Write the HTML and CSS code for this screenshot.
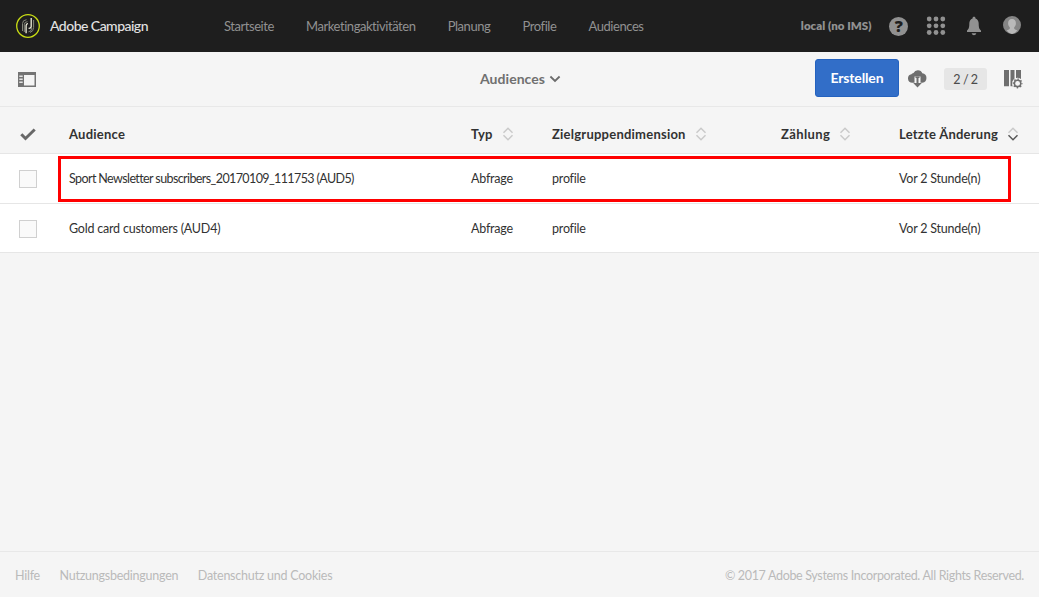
FILE: index.html
```
<!DOCTYPE html>
<html lang="de">
<head>
<meta charset="utf-8">
<title>Adobe Campaign</title>
<link rel="stylesheet" href="styles.css">
</head>
<body>
<svg class="defs" width="0" height="0">
  <symbol id="sort" viewBox="0 0 12 14">
    <path class="up" d="M1.500 5.700 6 1.200l4.500 4.500" fill="none" stroke-width="1.500"/>
    <path class="down" d="M1.500 8.300 6 12.800l4.500-4.500" fill="none" stroke="currentColor" stroke-width="1.500"/>
  </symbol>
</svg>
<div class="app">
  <header class="topbar">
    <svg class="logo" viewBox="0 0 24 24" width="24" height="24" fill="none">
      <circle cx="12" cy="12" r="11.300" stroke="#c8dc14" stroke-width="1.300"/>
      <path d="M6.500 17V9.500Q6.500 6 10.500 5.700M8.300 18V10.500Q8.300 7.800 11.500 7.700M12.500 17.800Q15.800 17.500 15.800 14M17.600 6v7.500Q17.600 17.500 14 18.500" stroke="#85877a" stroke-width="1"/>
      <path d="M10.100 19.300V11.500Q10.100 9.800 12 9.700M15.200 4v8.500q0 1.800-2.600 1.900" stroke="#f0f0dc" stroke-width="1.300"/>
    </svg>
    <span class="brand">Adobe Campaign</span>
    <nav class="nav">
      <a>Startseite</a><a>Marketingaktivitäten</a><a>Planung</a><a>Profile</a><a>Audiences</a>
    </nav>
    <span class="org">local (no IMS)</span>
    <div class="tools">
      <span class="help">?</span>
      <svg width="20" height="20" viewBox="0 0 20 20" fill="#919191">
        <circle cx="3.200" cy="3" r="2.400"/><circle cx="10" cy="3" r="2.400"/><circle cx="16.800" cy="3" r="2.400"/>
        <circle cx="3.200" cy="9.800" r="2.400"/><circle cx="10" cy="9.800" r="2.400"/><circle cx="16.800" cy="9.800" r="2.400"/>
        <circle cx="3.200" cy="16.500" r="2.400"/><circle cx="10" cy="16.500" r="2.400"/><circle cx="16.800" cy="16.500" r="2.400"/>
      </svg>
      <svg width="16" height="20" viewBox="0 0 16 20" fill="#919191">
        <path d="M8 .8c1 0 1.500.6 1.500 1.600 2.200.7 3.200 2.600 3.200 5.200 0 4 .5 5.400 2.300 7v1.300H1v-1.300c1.800-1.600 2.300-3 2.300-7 0-2.600 1-4.500 3.200-5.200C6.500 1.400 7 .8 8 .8zM5.600 17.200h4.800Q9.800 19.200 8 19.200t-2.400-2z"/>
      </svg>
      <svg class="avatar" width="18" height="18" viewBox="0 0 18 18">
        <circle cx="9" cy="9" r="9" fill="#858585"/>
        <path d="M9 3c2.700 0 3.900 1.800 3.900 4.200 0 1.700-.6 3.100-1.700 4.100v1.300c0 .7 1.500 1.200 3.200 2A9 9 0 0 1 9 18a9 9 0 0 1-5.400-3.400c1.700-.8 3.200-1.300 3.200-2v-1.300c-1.100-1-1.700-2.400-1.700-4.100C5.100 4.800 6.300 3 9 3z" fill="#b9b9b9"/>
      </svg>
    </div>
  </header>

  <div class="toolbar">
    <svg class="panel-icon" width="18" height="15" viewBox="0 0 18 15">
      <path d="M0 0h18v15H0z" fill="#747474"/><path d="M6 3h10.500v10.500H6z" fill="#f5f5f5"/>
      <path d="M1.300 3.500h3.400v1.500H1.300zM1.300 6.500h3.400v1.500H1.300zM1.300 9.500h3.400v1.500H1.300z" fill="#e4e4e4"/>
    </svg>
    <div class="title">Audiences
      <svg width="12" height="8" viewBox="0 0 12 8"><path d="M1.400 1.500 6 6l4.600-4.500" fill="none" stroke="#6b6b6b" stroke-width="1.800"/></svg>
    </div>
    <div class="actions">
      <button class="create">Erstellen</button>
      <svg class="cloud" width="19" height="19" viewBox="0 0 19 19">
        <path d="M4.400 13.800A4.300 4.300 0 0 1 3.400 5.300Q4 4 5.500 3.900A4.800 4.800 0 0 1 14.300 4.300 4.800 4.800 0 0 1 14.400 13.800z" fill="#6e6e6e"/>
        <path d="M6.500 7.500h6v6.500h-6z" fill="#f5f5f5"/>
        <path d="M7.500 7.500h4v1.500h-4zM8.500 8.500h2v5.500h3.300L9.500 18.600 5.200 14h3.300z" fill="#6e6e6e"/>
      </svg>
      <span class="count">2 / 2</span>
      <svg class="columns" width="19" height="19" viewBox="0 0 19 19">
        <path d="M0 0h5v16.300H0zM6.500 0h4v16.300h-4zM12 0h5v9h-5z" fill="#6e6e6e"/>
        <circle cx="13.600" cy="13.400" r="5.600" fill="#f5f5f5"/>
        <circle cx="13.600" cy="13.400" r="3.200" fill="none" stroke="#6e6e6e" stroke-width="1.500"/>
        <circle cx="13.600" cy="13.400" r="4.300" fill="none" stroke="#6e6e6e" stroke-width="1.400" stroke-dasharray="1.500 1.877" stroke-dashoffset=".75"/>
      </svg>
    </div>
  </div>

  <div class="table">
    <div class="row head">
      <div class="check-cell"><svg width="16" height="13" viewBox="0 0 16 13"><path d="M1.300 6.300 5.500 10.500 14.700 1.500" fill="none" stroke="#686868" stroke-width="3"/></svg></div>
      <div>Audience</div>
      <div>Typ<svg class="sort"><use href="#sort"/></svg></div>
      <div>Zielgruppendimension<svg class="sort"><use href="#sort"/></svg></div>
      <div class="number">Zählung<svg class="sort"><use href="#sort"/></svg></div>
      <div>Letzte Änderung<svg class="sort active"><use href="#sort"/></svg></div>
    </div>
    <div class="row first">
      <div class="check-cell"><span class="box"></span></div>
      <div class="long-name">Sport Newsletter subscribers_20170109_111753 (AUD5)</div>
      <div>Abfrage</div><div>profile</div><div></div><div>Vor 2 Stunde(n)</div>
      <span class="highlight"></span>
    </div>
    <div class="row last">
      <div class="check-cell"><span class="box"></span></div>
      <div>Gold card customers (AUD4)</div>
      <div>Abfrage</div><div>profile</div><div></div><div>Vor 2 Stunde(n)</div>
    </div>
  </div>

  <footer class="footer">
    <a>Hilfe</a><a>Nutzungsbedingungen</a><a>Datenschutz und Cookies</a>
    <span class="copyright">© 2017 Adobe Systems Incorporated. All Rights Reserved.</span>
  </footer>
</div>
</body>
</html>
```
FILE: styles.css
```
* { box-sizing: border-box; }
body {
  margin: 0;
  background: #fff;
  font: 400 13px/18px Lato, "Noto Sans", sans-serif;
  letter-spacing: -.45px;
  color: #323232;
  overflow: hidden;
}
svg { display: block; flex: none; }
.defs { position: absolute; }
.app {
  width: 1039px;
  height: 597px;
  background: #f5f5f5;
  display: flex;
  flex-direction: column;
  white-space: nowrap;
}

.topbar {
  height: 52px;
  flex: none;
  background: #1e1e1e;
  display: flex;
  align-items: center;
  padding: 0 18px 0 16px;
}
.brand {
  width: 174px;
  margin-left: 10px;
  font-size: 14px;
  font-weight: 500;
  letter-spacing: -.53px;
  color: #e2e2e2;
}
.nav { display: flex; gap: 32.2px; color: #919191; }
.org {
  margin-left: auto;
  font-size: 11.5px;
  font-weight: 800;
  letter-spacing: .03px;
  color: #919191;
}
.tools { display: flex; align-items: center; margin-left: 17.5px; }
.help {
  width: 19px;
  height: 19px;
  border-radius: 50%;
  background: #919191;
  color: #1e1e1e;
  font: 800 16px/19px "Open Sans", sans-serif;
  text-align: center;
  margin-right: 18px;
}
.tools svg + svg { margin-left: 20px; }
.tools svg + .avatar { margin: -2px 0 0 21px; }

.toolbar {
  height: 55px;
  flex: none;
  border-bottom: 1px solid #e8e8e8;
  display: grid;
  grid-template-columns: 1fr auto 1fr;
  align-items: center;
  padding: 0 16px 0 18px;
}
.title {
  display: flex;
  align-items: center;
  gap: 4px;
  font-size: 14px;
  font-weight: 700;
  letter-spacing: .05px;
  color: #707070;
}
.actions { display: flex; align-items: center; justify-self: end; }
.create {
  width: 84px;
  height: 38px;
  margin: -2px 9px 0 0;
  padding: 0;
  border: 1px solid #2462bf;
  border-radius: 3px;
  background: #326ec8;
  color: #fff;
  font: 700 14px/18px Lato, sans-serif;
  letter-spacing: -.15px;
}
.cloud { margin-top: -1px; }
.count {
  width: 43px;
  height: 22px;
  margin: 0 17px;
  border-radius: 3px;
  background: #e6e6e6;
  color: #4b4b4b;
  font-size: 12.5px;
  line-height: 23px;
  text-align: center;
}

.row {
  display: grid;
  grid-template-columns: 69px 402px 81px 229px 118px 1fr;
  align-items: center;
  height: 50px;
  background: #fff;
  border-bottom: 1px solid #e6e6e6;
  position: relative;
  font-size: 12.5px;
  letter-spacing: -.21px;
}
.row > div { display: flex; align-items: center; }
.row.first > div:not(.check-cell),
.row.last > div { padding-top: 1px; }
.row.last { height: 49px; }
.row.head {
  height: 47px;
  padding-top: 8px;
  background: #f5f5f5;
  font-size: 13px;
  font-weight: 700;
  letter-spacing: .23px;
}
.check-cell { padding-left: 19px; }
.head .check-cell { padding-left: 20px; }
.head .number { letter-spacing: .4px; }
.box { width: 18px; height: 18px; border: 1px solid #d0d0d0; background: #fafafa; }
.row .long-name { letter-spacing: -.6px; }
.sort { width: 12px; height: 14px; margin-left: 9px; color: #cacaca; stroke: #cacaca; }
.sort.active { color: #585858; }
.highlight {
  position: absolute;
  left: 58px;
  top: 2px;
  width: 953px;
  height: 46px;
  border: 3px solid #f00;
}

.footer {
  height: 46px;
  margin-top: auto;
  border-top: 1px solid #e8e8e8;
  display: flex;
  align-items: center;
  gap: 19.500px;
  padding: 3px 15px 0;
  color: #bababa;
  font-size: 12.5px;
  letter-spacing: -.24px;
}
.copyright { margin-left: auto; letter-spacing: -.33px; }
```
